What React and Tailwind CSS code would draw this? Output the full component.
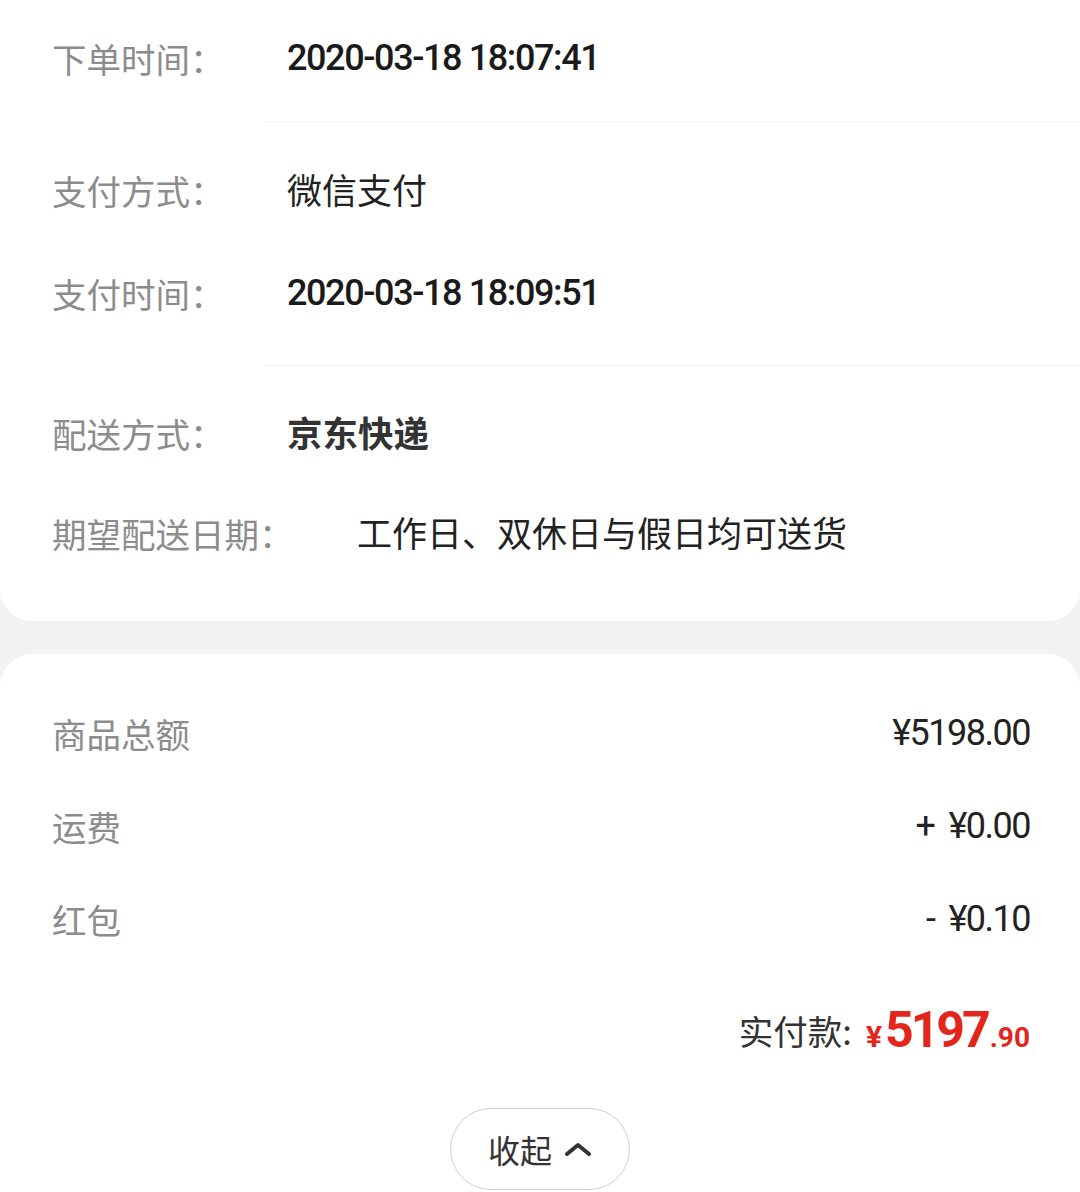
import React from "react";

const cjk = "font-['Noto_Sans_CJK_SC',sans-serif]";
const num = "font-['Roboto','Noto_Sans_CJK_SC',sans-serif]";

const Row = ({ label, children, valueLeft = "pl-[287px]" }) => (
  <div className="relative h-[68px] flex items-center">
    <span className={`absolute left-[52px] text-[34.5px] leading-none text-[#8c8c8c] ${cjk}`}>
      {label}
    </span>
    <div className={valueLeft}>{children}</div>
  </div>
);

const Divider = () => <div className="ml-[264px] h-px bg-[#f1f1f1]" />;

const MoneyRow = ({ label, sign, value }) => (
  <div className="h-[68px] flex items-center justify-between pl-[52px] pr-[50px]">
    <span className={`text-[34.5px] leading-none text-[#8c8c8c] ${cjk}`}>{label}</span>
    <span className={`text-[36px] leading-none text-[#222] tracking-[-1.5px] ${num}`}>
      {sign && <span className="mr-[14px]">{sign}</span>}
      {value}
    </span>
  </div>
);

export default function App() {
  return (
    <div className="w-[1080px] h-[1192px] overflow-hidden bg-[#f2f2f2]">
      {/* order info card */}
      <div className="bg-white rounded-b-[32px] h-[621px]">
        <div className="pt-[24px]">
          <Row label="下单时间：">
            <span className={`text-[36px] leading-none font-medium text-[#1a1a1a] tracking-[-1.4px] ${num}`}>
              2020-03-18 18:07:41
            </span>
          </Row>
        </div>
        <div className="h-[29px]" />
        <Divider />
        <div className="h-[34px]" />
        <Row label="支付方式：">
          <span className={`text-[35px] leading-none text-[#222] ${cjk}`}>微信支付</span>
        </Row>
        <div className="h-[35px]" />
        <Row label="支付时间：">
          <span className={`text-[36px] leading-none font-medium text-[#1a1a1a] tracking-[-1.4px] ${num}`}>
            2020-03-18 18:09:51
          </span>
        </Row>
        <div className="h-[38px]" />
        <Divider />
        <div className="h-[33px]" />
        <Row label="配送方式：">
          <span className={`text-[35.5px] leading-none font-bold text-[#333] ${cjk}`}>京东快递</span>
        </Row>
        <div className="h-[32px]" />
        <Row label="期望配送日期：" valueLeft="pl-[357px]">
          <span className={`text-[35px] leading-none text-[#222] ${cjk}`}>
            工作日、双休日与假日均可送货
          </span>
        </Row>
      </div>

      {/* amount card */}
      <div className="mt-[33px] bg-white rounded-t-[32px] h-[600px]">
        <div className="h-[45px]" />
        <MoneyRow label="商品总额" value="¥5198.00" />
        <div className="h-[25px]" />
        <MoneyRow label="运费" sign="+" value="¥0.00" />
        <div className="h-[25px]" />
        <MoneyRow label="红包" sign="-" value="¥0.10" />
        <div className="h-[43px]" />
        <div className="h-[68px] flex items-center justify-end pr-[50px]">
          <span className={`text-[34.5px] leading-none text-[#333] mr-[14px] ${cjk}`}>实付款:</span>
          <span className={`text-[#e3251b] font-bold ${num} flex items-baseline`}>
            <span className="text-[30px] leading-none mr-[3px]">¥</span>
            <span className="text-[50px] leading-none tracking-[-3px]">5197</span>
            <span className="text-[28px] leading-none ml-[2px]">.90</span>
          </span>
        </div>
        <div className="h-[44px]" />
        <div className="flex justify-center">
          <button className="w-[180px] h-[82px] rounded-full border border-[#cfcfcf] flex items-center justify-center gap-[12px] bg-white">
            <span className={`text-[32px] leading-none text-[#333] ${cjk}`}>收起</span>
            <svg width="28" height="18" viewBox="0 0 28 18" fill="none">
              <path
                d="M3 14 L14 5 L25 14"
                stroke="#333"
                strokeWidth="4"
                strokeLinecap="round"
                strokeLinejoin="round"
              />
            </svg>
          </button>
        </div>
      </div>
    </div>
  );
}
